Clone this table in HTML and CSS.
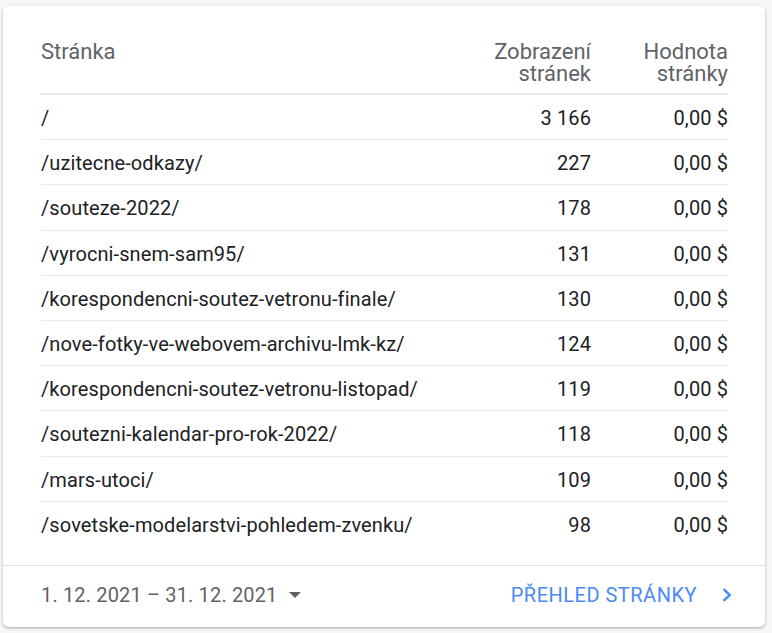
FILE: index.html
```html
<!DOCTYPE html>
<html lang="cs">
<head>
<meta charset="utf-8">
<link rel="stylesheet" href="styles.css">
</head>
<body>
<div class="card">
  <div class="content">
    <table class="tbl">
      <thead>
        <tr>
          <th class="col-page"><span class="hl">Stránka</span></th>
          <th class="col-num"><span class="hl">Zobrazení</span><span class="hl">stránek</span></th>
          <th class="col-val"><span class="hl">Hodnota</span><span class="hl">stránky</span></th>
        </tr>
      </thead>
      <tbody>
        <tr><td>/</td><td class="num">3 166</td><td class="num">0,00 $</td></tr>
        <tr><td>/uzitecne-odkazy/</td><td class="num">227</td><td class="num">0,00 $</td></tr>
        <tr><td>/souteze-2022/</td><td class="num">178</td><td class="num">0,00 $</td></tr>
        <tr><td>/vyrocni-snem-sam95/</td><td class="num">131</td><td class="num">0,00 $</td></tr>
        <tr><td>/korespondencni-soutez-vetronu-finale/</td><td class="num">130</td><td class="num">0,00 $</td></tr>
        <tr><td>/nove-fotky-ve-webovem-archivu-lmk-kz/</td><td class="num">124</td><td class="num">0,00 $</td></tr>
        <tr><td>/korespondencni-soutez-vetronu-listopad/</td><td class="num">119</td><td class="num">0,00 $</td></tr>
        <tr><td>/soutezni-kalendar-pro-rok-2022/</td><td class="num">118</td><td class="num">0,00 $</td></tr>
        <tr><td>/mars-utoci/</td><td class="num">109</td><td class="num">0,00 $</td></tr>
        <tr class="last"><td>/sovetske-modelarstvi-pohledem-zvenku/</td><td class="num">98</td><td class="num">0,00 $</td></tr>
      </tbody>
    </table>
  </div>
  <div class="footer">
    <div class="range">1. 12. 2021 – 31. 12. 2021
      <svg class="caret" width="12" height="6" viewBox="0 0 12 6"><path d="M0 0h12L6 6z" fill="#5f6368"/></svg>
    </div>
    <div class="link">PŘEHLED STRÁNKY
      <svg class="chev" width="12" height="14" viewBox="0 0 12 14"><path d="M2.6 1.2l6.2 5.8-6.2 5.8" fill="none" stroke="#4a8af4" stroke-width="2.4"/></svg>
    </div>
  </div>
</div>
</body>
</html>
```

FILE: styles.css
```css
html, body {
  margin: 0;
  padding: 0;
  background: #f5f6f7;
}
body {
  font-family: Roboto, "Liberation Sans", sans-serif;
  padding: 6px 7px 6px 3px;
}
.card {
  width: 762px;
  height: 621px;
  background: #fff;
  border-radius: 5px;
  box-shadow: 0 1px 3px rgba(60, 64, 67, 0.3), 0 1px 2px rgba(60, 64, 67, 0.15);
  display: flex;
  flex-direction: column;
  box-sizing: border-box;
}
.content {
  flex: 1;
  padding: 35px 37px 0 38px;
}
.tbl {
  width: 100%;
  border-collapse: collapse;
  font-size: 20px;
  letter-spacing: 0.1px;
  color: #202124;
}
.tbl th {
  font-size: 22px;
  letter-spacing: 0;
  font-weight: 400;
  color: #5f6368;
  line-height: 22px;
  vertical-align: top;
  padding: 0 0 8px;
  height: 44px;
  border-bottom: 2px solid #e8eaed;
}
.hl {
  display: block;
  height: 22px;
  line-height: 22px;
}
.tbl th.col-page { text-align: left; }
.tbl th.col-num { text-align: right; width: 150px; }
.tbl th.col-val { text-align: right; width: 137px; }
.tbl td {
  height: 42.2px;
  padding: 2px 0 0;
  border-bottom: 1px solid #e8eaed;
  line-height: 22px;
}
.tbl td.num { text-align: right; }
.tbl tr.last td { border-bottom: none; }
.footer {
  border-top: 1px solid #e0e0e0;
  height: 62px;
  flex: none;
  display: flex;
  align-items: center;
  justify-content: space-between;
  padding: 0 32px 4px 38px;
  box-sizing: border-box;
  font-size: 20px;
}
.range {
  color: #5f6368;
  display: flex;
  align-items: center;
  gap: 11px;
  letter-spacing: 0.15px;
}
.link {
  color: #4a8af4;
  display: flex;
  align-items: center;
  gap: 24px;
  letter-spacing: 0.5px;
}
```
